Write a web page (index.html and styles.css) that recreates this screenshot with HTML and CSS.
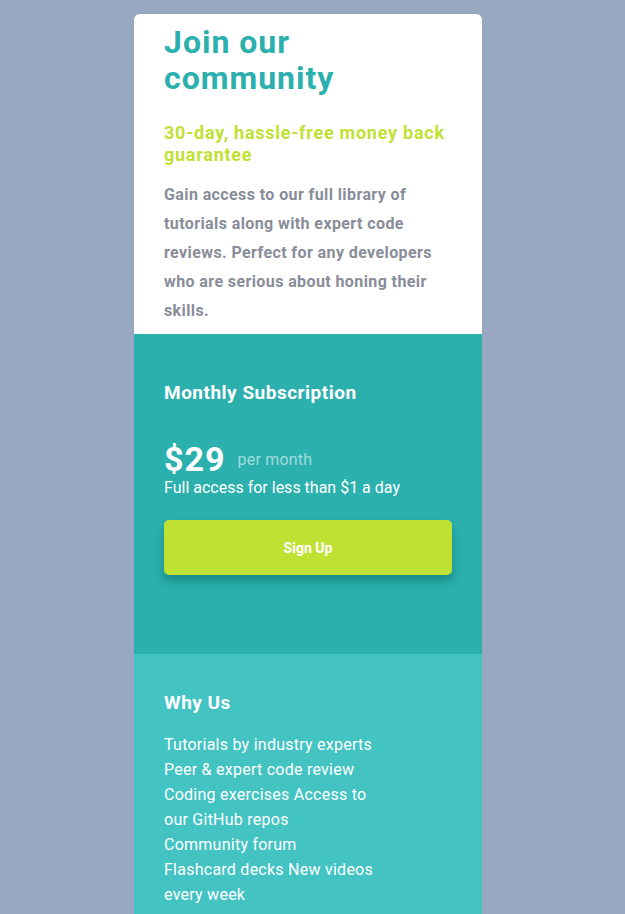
FILE: index.html
```html
<!DOCTYPE html>
<html lang="en">
<head>
<meta charset="utf-8">
<title>Single price grid</title>
<link rel="stylesheet" href="styles.css">
</head>
<body>
<main class="card">
  <section class="intro">
    <h1 class="title">Join our community</h1>
    <h2 class="subtitle">30-day, hassle-free money back guarantee</h2>
    <p class="text">Gain access to our full library of tutorials along with expert code reviews. Perfect for any developers who are serious about honing their skills.</p>
  </section>
  <section class="subscription">
    <h3 class="heading">Monthly Subscription</h3>
    <div class="price-row">
      <span class="price">$29</span>
      <span class="period">per month</span>
    </div>
    <p class="access">Full access for less than $1 a day</p>
    <button class="signup" type="button">Sign Up</button>
  </section>
  <section class="why">
    <h3 class="heading">Why Us</h3>
    <ul class="reasons">
      <li>Tutorials by industry experts</li>
      <li>Peer &amp; expert code review</li>
      <li>Coding exercises Access to our GitHub repos</li>
      <li>Community forum</li>
      <li>Flashcard decks New videos every week</li>
    </ul>
  </section>
</main>
</body>
</html>
```
FILE: styles.css
```css
* { box-sizing: border-box; }
html, body { margin: 0; padding: 0; }
body {
  background: #98a8c0;
  font-family: Roboto, "Open Sans", sans-serif;
  padding: 14px 0 0 134px;
}
.card {
  width: 348px;
  border-radius: 6px 6px 0 0;
  overflow: hidden;
}
.intro {
  background: #ffffff;
  padding: 10px 30px 9px;
}
.title {
  margin: 0;
  color: #2bb0ae;
  font-size: 32px;
  line-height: 36px;
  font-weight: 700;
  letter-spacing: 1px;
}
.subtitle {
  margin: 26px 0 0;
  color: #bfe134;
  font-size: 18px;
  line-height: 22px;
  font-weight: 700;
  letter-spacing: 0.75px;
}
.text {
  margin: 14px 0 0;
  color: #888d99;
  font-size: 16px;
  line-height: 29px;
  font-weight: 700;
  letter-spacing: 0.4px;
}
.subscription {
  background: #2bb0ae;
  padding: 47px 30px 79px;
  color: #ffffff;
}
.heading {
  margin: 0;
  font-size: 19px;
  line-height: 24px;
  font-weight: 700;
  color: #ffffff;
  letter-spacing: 0.5px;
}
.price-row {
  display: flex;
  align-items: center;
  gap: 12px;
  margin-top: 36px;
}
.price {
  font-size: 34px;
  line-height: 36px;
  font-weight: 700;
  letter-spacing: 1px;
}
.period {
  font-size: 16px;
  color: #a0dcdb;
  letter-spacing: 0.2px;
}
.access {
  margin: 1px 0 0;
  font-size: 16px;
  line-height: 20px;
}
.signup {
  display: block;
  width: 288px;
  height: 55px;
  margin-top: 22px;
  border: 0;
  border-radius: 5px;
  background: #bfe134;
  color: #ffffff;
  font-family: inherit;
  font-size: 14px;
  font-weight: 700;
  box-shadow: 0 6px 10px rgba(0, 60, 60, 0.35);
}
.why {
  background: #44c3c3;
  padding: 37px 30px 80px;
  color: #ffffff;
}
.reasons {
  list-style: none;
  margin: 17px 0 0;
  padding: 0;
  width: 216px;
  font-size: 16px;
  line-height: 25px;
  letter-spacing: 0.25px;
}
```
